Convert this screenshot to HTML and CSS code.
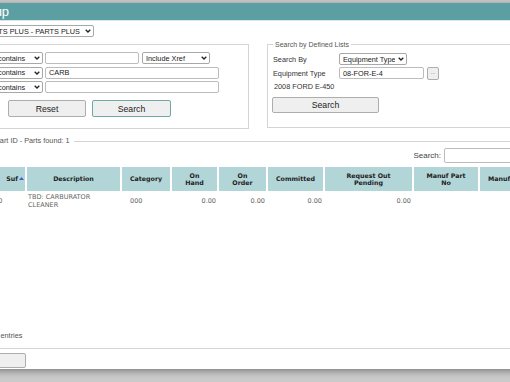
FILE: index.html
```html
<!DOCTYPE html>
<html lang="en">
<head>
    <meta charset="UTF-8">
    <title>Part Lookup</title>
    <link rel="stylesheet" href="styles.css">
</head>
<body>
    <div class="dialog">
        <div class="titlebar">Part Lookup</div>
        <div class="content">
            <div class="company-row">
                <label class="company-label">Company</label>
                <span class="select company-select">
                    <select><option>PARTS PLUS - PARTS PLUS</option></select>
                    <svg class="chevron" width="6" height="4" viewBox="0 0 6 4"><path d="M0.7 0.7 L3 3 L5.3 0.7" fill="none" stroke="#222" stroke-width="1.3"/></svg>
                </span>
            </div>

            <div class="search-panels">
                <fieldset class="panel panel-part">
                    <div class="criteria">
                        <div class="criteria-row">
                            <label>Part ID</label>
                            <span class="select op">
                                <select><option>contains</option></select>
                                <svg class="chevron" width="6" height="4" viewBox="0 0 6 4"><path d="M0.7 0.7 L3 3 L5.3 0.7" fill="none" stroke="#222" stroke-width="1.3"/></svg>
                            </span>
                            <input type="text" class="value-short">
                            <span class="select xref">
                                <select><option>Include Xref</option></select>
                                <svg class="chevron" width="6" height="4" viewBox="0 0 6 4"><path d="M0.7 0.7 L3 3 L5.3 0.7" fill="none" stroke="#222" stroke-width="1.3"/></svg>
                            </span>
                        </div>
                        <div class="criteria-row">
                            <label>Description</label>
                            <span class="select op">
                                <select><option>contains</option></select>
                                <svg class="chevron" width="6" height="4" viewBox="0 0 6 4"><path d="M0.7 0.7 L3 3 L5.3 0.7" fill="none" stroke="#222" stroke-width="1.3"/></svg>
                            </span>
                            <input type="text" class="value-long" value="CARB">
                        </div>
                        <div class="criteria-row">
                            <label>Manuf Part No</label>
                            <span class="select op">
                                <select><option>contains</option></select>
                                <svg class="chevron" width="6" height="4" viewBox="0 0 6 4"><path d="M0.7 0.7 L3 3 L5.3 0.7" fill="none" stroke="#222" stroke-width="1.3"/></svg>
                            </span>
                            <input type="text" class="value-long">
                        </div>
                    </div>
                    <div class="button-row">
                        <button class="btn btn-reset">Reset</button>
                        <button class="btn btn-search">Search</button>
                    </div>
                </fieldset>

                <fieldset class="panel panel-lists">
                    <legend>Search by Defined Lists</legend>
                    <div class="list-grid">
                        <label>Search By</label>
                        <span class="select list-select">
                            <select><option>Equipment Type</option></select>
                            <svg class="chevron" width="6" height="4" viewBox="0 0 6 4"><path d="M0.7 0.7 L3 3 L5.3 0.7" fill="none" stroke="#222" stroke-width="1.3"/></svg>
                        </span>
                        <label>Equipment Type</label>
                        <div class="equip-field">
                            <input type="text" class="equip-input" value="08-FOR-E-4">
                            <button class="btn-dots">...</button>
                        </div>
                        <span class="equip-name">2008 FORD E-450</span>
                    </div>
                    <button class="btn btn-wide">Search</button>
                </fieldset>
            </div>

            <fieldset class="results">
                <legend>Part ID - Parts found: 1</legend>
                <div class="table-filter">
                    <label>Search:</label>
                    <input type="text" class="filter-input">
                </div>
                <div class="table-scroll">
                    <table class="grid">
                        <colgroup>
                            <col class="c-part">
                            <col class="c-suf">
                            <col class="c-desc">
                            <col class="c-cat">
                            <col class="c-hand">
                            <col class="c-order">
                            <col class="c-comm">
                            <col class="c-req">
                            <col class="c-mpn">
                            <col class="c-manuf">
                        </colgroup>
                        <thead>
                            <tr>
                                <th>Part ID</th>
                                <th class="suf">Suf<svg class="sort" width="5" height="3" viewBox="0 0 5 3"><path d="M0 3 L2.5 0 L5 3 Z" fill="#3f5fc8"/></svg></th>
                                <th>Description</th>
                                <th>Category</th>
                                <th>On<br>Hand</th>
                                <th>On<br>Order</th>
                                <th>Committed</th>
                                <th>Request Out<br>Pending</th>
                                <th>Manuf Part<br>No</th>
                                <th>Manufacturer</th>
                            </tr>
                        </thead>
                        <tbody>
                            <tr>
                                <td>CARB</td>
                                <td>000</td>
                                <td>TBD: CARBURATOR CLEANER</td>
                                <td class="cat">000</td>
                                <td class="num">0.00</td>
                                <td class="num">0.00</td>
                                <td class="num">0.00</td>
                                <td class="num">0.00</td>
                                <td></td>
                                <td></td>
                            </tr>
                        </tbody>
                    </table>
                </div>
                <div class="table-info">Showing 1 to 1 of 1 entries</div>
            </fieldset>
        </div>
        <div class="buttonpane">
            <button class="btn btn-close">Close</button>
        </div>
    </div>
</body>
</html>
```

FILE: styles.css
```css
html,
body {
    margin: 0;
    padding: 0;
}

body {
    width: 510px;
    height: 382px;
    overflow: hidden;
    background-color: #cacaca;
    font-family: "Liberation Sans", Arial, sans-serif;
    font-size: 7.3px;
    color: #333;
}

.dialog {
    margin: 3px 0 0 -90px;
    width: 700px;
    background-color: #fff;
    box-shadow: 0 2px 7px rgba(0, 0, 0, 0.4);
}

.titlebar {
    height: 17px;
    line-height: 17px;
    padding-left: 29px;
    background-color: #5c9fa3;
    border-bottom: 1px solid #d5e7e8;
    color: #fff;
    font-size: 13px;
}

.content {
    padding: 4px 10px 0;
}

select,
input,
button {
    box-sizing: border-box;
    margin: 0;
    font-family: "Liberation Sans", Arial, sans-serif;
    font-size: 7.3px;
    color: #222;
}

/* custom select: native control, drawn chevron on top */
.select {
    position: relative;
    display: inline-block;
    height: 12px;
    flex: none;
}

.select select {
    -webkit-appearance: none;
    appearance: none;
    width: 100%;
    height: 100%;
    padding: 0 11px 0 3px;
    border: 1px solid #a8a8a8;
    border-radius: 2px;
    background-color: #fff;
    outline: none;
}

.select .chevron {
    position: absolute;
    right: 3px;
    top: 4px;
    pointer-events: none;
}

input[type="text"] {
    height: 12px;
    padding: 0 3px;
    border: 1px solid #bcbcbc;
    border-radius: 2px;
    background-color: #fff;
    outline: none;
}

.btn {
    height: 17px;
    padding: 0;
    border: 1px solid #adadad;
    border-radius: 2px;
    background-color: #efefef;
    font-size: 8.7px;
    color: #222;
}

/* company */
.company-row {
    display: flex;
    height: 12px;
}

.company-label {
    width: 60px;
    line-height: 12px;
}

.company-select {
    width: 114px;
}

/* search panels */
.search-panels {
    display: flex;
    align-items: flex-start;
    margin-top: 3px;
}

fieldset {
    margin: 0;
    min-width: 0;
    box-sizing: border-box;
    border: 1px solid #d4d4d4;
}

legend {
    padding: 0 2px;
    line-height: 9px;
    font-size: 7px;
    color: #555;
}

.panel-part {
    width: 329px;
    margin-top: 4px;
    padding: 7px 8px 11px;
}

.criteria {
    display: flex;
    flex-direction: column;
    gap: 2.5px;
}

.criteria-row {
    display: flex;
    height: 12px;
}

.criteria-row label {
    width: 65px;
    line-height: 12px;
}

.op {
    width: 49px;
}

.criteria-row input {
    margin-left: 2px;
}

.value-short {
    width: 94px;
}

.value-long {
    width: 174px;
}

.xref {
    width: 68px;
    margin-left: 3px;
}

.button-row {
    display: flex;
    margin-top: 7px;
}

.btn-reset {
    width: 78px;
    margin-left: 79px;
}

.btn-search {
    width: 79px;
    margin-left: 6px;
    border-color: #6fa9a6;
}

.panel-lists {
    width: 280px;
    margin-left: 18px;
    padding: 4px 5px 14px;
}

.list-grid {
    display: grid;
    grid-template-columns: 66px auto;
    grid-template-rows: 12px 13px 10px;
    row-gap: 1.5px;
    align-items: center;
}

.list-select {
    width: 68px;
    justify-self: start;
}

.equip-field {
    display: flex;
    align-items: center;
}

.equip-input {
    width: 85px;
}

.btn-dots {
    width: 12px;
    height: 13px;
    margin-left: 3px;
    padding: 0 0 3px;
    border: 1px solid #adadad;
    border-radius: 2px;
    background-color: #efefef;
    font-size: 6px;
    color: #777;
}

.equip-name {
    grid-column: 1 / -1;
    padding-left: 1px;
}

.btn-wide {
    display: block;
    width: 107px;
    height: 16px;
    margin: 6px 0 0 -1px;
}

/* results */
.results {
    width: 680px;
    margin-top: 7px;
    padding: 2px 15px 7px;
}

.results legend {
    margin-left: 57px;
    padding: 0 4px 0 2px;
    line-height: 10px;
    font-size: 7.3px;
}

.table-filter {
    display: flex;
    justify-content: flex-end;
    height: 15px;
}

.table-filter label {
    margin-right: 3px;
    line-height: 15px;
    font-size: 8px;
    color: #444;
}

.filter-input {
    width: 140px;
    height: 15px !important;
}

.table-scroll {
    height: 164px;
    margin-top: 4px;
}

.grid {
    width: 610px;
    table-layout: fixed;
    border-collapse: separate;
    border-spacing: 2px 0;
    font-family: "DejaVu Sans", Verdana, sans-serif;
}

.c-part { width: 49px; }
.c-suf { width: 36px; }
.c-desc { width: 93px; }
.c-cat { width: 48px; }
.c-hand { width: 45px; }
.c-order { width: 47px; }
.c-comm { width: 55px; }
.c-req { width: 87px; }
.c-mpn { width: 64px; }
.c-manuf { width: 64px; }

.grid th {
    height: 24px;
    padding: 0 1px;
    background-color: #b2d5d7;
    font-size: 6.3px;
    line-height: 7.5px;
    font-weight: bold;
    color: #222;
    text-align: center;
    vertical-align: middle;
    white-space: nowrap;
}

.grid th.suf {
    text-align: right;
}

.sort {
    margin-left: 1px;
    vertical-align: 1px;
}

.grid td {
    height: 19px;
    padding: 1px 1px 0;
    box-sizing: border-box;
    font-size: 6.5px;
    line-height: 8px;
    color: #666;
    text-align: left;
    vertical-align: middle;
}

.grid td.cat {
    padding-left: 8px;
}

.grid td.num {
    text-align: right;
}

.table-info {
    line-height: 10px;
    color: #555;
}

.buttonpane {
    padding: 4px 0 1px 10px;
}

.btn-close {
    display: block;
    width: 106px;
    height: 15px;
}
```
